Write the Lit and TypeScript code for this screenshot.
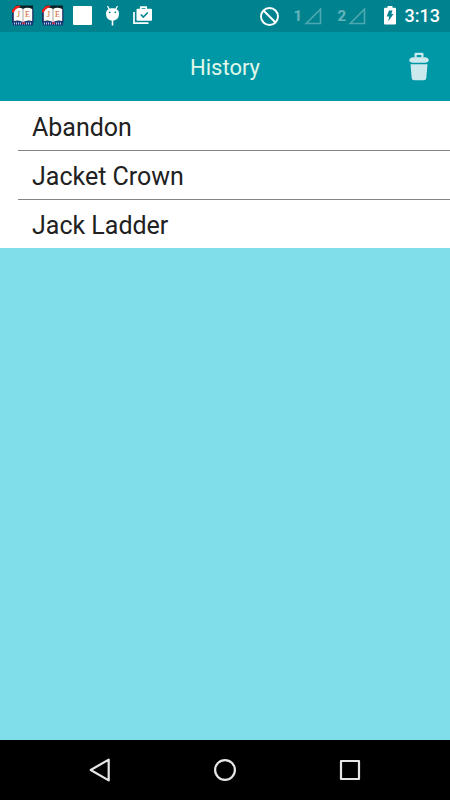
import { LitElement, html, css, svg } from "lit";
import { customElement, property, state } from "lit/decorators.js";

@customElement("status-bar")
class StatusBar extends LitElement {
  static styles = css`
    :host {
      display: flex;
      justify-content: space-between;
      align-items: center;
      height: 32px;
      padding: 0 10px 0 12px;
      background: #00838f;
      color: #fff;
    }
    svg {
      display: block;
    }
    .notices,
    .system {
      display: flex;
      align-items: center;
    }
    .notices {
      gap: 8px;
    }
    .block {
      margin-right: 14px;
    }
    .sim {
      display: flex;
      align-items: center;
      gap: 2px;
      width: 44px;
      font-size: 15px;
      line-height: 20px;
      font-weight: 700;
      color: #66b5bc;
    }
    .letter {
      font: 8px "Liberation Serif", serif;
      fill: #d0602c;
    }
    .battery {
      margin: 0 9px 0 2px;
    }
    .time {
      font-size: 18px;
      line-height: 20px;
      font-weight: 500;
    }
  `;

  private book() {
    return html`<svg width="22" height="22" viewBox="0 0 22 22" aria-hidden="true">
      <path d="M4 0.500h17V16H1V5z" fill="#0b2027" />
      <path d="M0 4h2v14H0zM20 4h1.500v14H20z" fill="#1d2f63" />
      <path d="M1 16h20v4.500H1z" fill="#173a78" />
      <path d="M1.800 4.500Q7 1.500 11 4q4-2.500 9.200 0v12Q15 14.500 11 17q-4-2.500-9.200-1z" fill="#fffdf9" />
      <path d="M11 4v12.500" stroke="#a9a4a6" />
      <path d="M0 7.500V5L4 1l4-0.500V2L4 4L1.500 7.500z" fill="#f22019" />
      <text class="letter" x="5" y="12">J</text>
      <text class="letter" x="13" y="12">E</text>
      <path d="M2 18.500h18" stroke="#b9c8e4" stroke-width="2" stroke-dasharray="1 1" />
      <path d="M10 18h3" stroke="#d8203a" stroke-width="1.500" />
    </svg>`;
  }

  private sim(n: number) {
    return html`<div class="sim">
      <span>${n}</span>
      <svg width="18" height="18" viewBox="0 0 18 18" aria-hidden="true">
        <path d="M2.200 16.500H16.500V2.200z" fill="none" stroke="#4da8b1" stroke-width="1.600" />
      </svg>
    </div>`;
  }

  render() {
    return html`
      <div class="notices">
        ${this.book()} ${this.book()}
        <svg width="22" height="22" viewBox="0 0 22 22" aria-hidden="true">
          <rect x="1" y="1" width="19" height="19" rx="1" fill="#fff" />
        </svg>
        <svg width="22" height="22" viewBox="0 0 22 22" aria-hidden="true">
          <path d="M5.500 1.200l2 3.300M15.500 1.200l-2 3.300" stroke="#fff" stroke-width="1.300" />
          <path
            d="M4 8.500C4 5 7 3.200 10.500 3.200S17 5 17 8.500c0 4.500-2.500 7-6.500 7S4 13 4 8.500z"
            fill="#fff"
          />
          <circle cx="7.700" cy="7.300" r="0.900" fill="#00838f" />
          <circle cx="13.300" cy="7.300" r="0.900" fill="#00838f" />
          <path d="M10.500 15v5.500" stroke="#fff" stroke-width="1.600" />
        </svg>
        <svg width="22" height="22" viewBox="0 0 22 22" aria-hidden="true">
          <path d="M2 7v11.100h14.500" fill="none" stroke="#fff" stroke-width="1.700" />
          <path d="M8.800 5V2.100h5.400V5" fill="none" stroke="#fff" stroke-width="1.700" />
          <rect x="4.500" y="3.800" width="15.500" height="12" rx="1" fill="#fff" />
          <path d="M8.800 9.500l2.500 2.500l4.500-4.500" fill="none" stroke="#00838f" stroke-width="1.600" />
        </svg>
      </div>
      <div class="system">
        <svg class="block" width="21" height="21" viewBox="0 0 21 21" aria-label="Do not disturb" role="img">
          <circle cx="10.500" cy="10.500" r="8.500" fill="none" stroke="#fff" stroke-width="1.900" />
          <path d="M4.500 4.500l12 12" stroke="#fff" stroke-width="1.900" />
        </svg>
        ${this.sim(1)} ${this.sim(2)}
        <svg class="battery" width="12" height="20" viewBox="0 0 12 20" aria-label="Charging" role="img">
          <path
            d="M3.500 0h5v1.800H11q1 0 1 1V17.500q0 1-1 1H1q-1 0-1-1V2.800q0-1 1-1h2.500z"
            fill="#fff"
          />
          <path d="M5 4.500H8.500L7.300 8H9.500L4.200 15.500L5.300 10.500H2.700z" fill="#00838f" />
        </svg>
        <span class="time">3:13</span>
      </div>
    `;
  }
}

@customElement("history-list")
class HistoryList extends LitElement {
  static styles = css`
    ul {
      margin: 0;
      padding: 0;
      list-style: none;
      background: #fff;
    }
    li {
      padding-left: 18px;
    }
    a {
      display: block;
      box-sizing: border-box;
      height: 49px;
      padding: 8px 14px;
      font-size: 25px;
      line-height: 38px;
      color: #212121;
      text-decoration: none;
    }
    li + li a {
      border-top: 1px solid #858585;
      padding-top: 7px;
    }
  `;

  @property({ attribute: false }) words: string[] = [];

  render() {
    return html`<ul>
      ${this.words.map((w) => html`<li><a href="#">${w}</a></li>`)}
    </ul>`;
  }
}

@customElement("nav-bar")
class NavBar extends LitElement {
  static styles = css`
    :host {
      display: flex;
      justify-content: center;
      height: 60px;
      background: #000;
    }
    button {
      display: grid;
      place-items: center;
      width: 125px;
      padding: 0;
      border: 0;
      background: none;
    }
    svg {
      fill: none;
      stroke: #e6e6e6;
      stroke-width: 2.2;
      stroke-linejoin: round;
    }
  `;

  private key(label: string, shape: unknown) {
    return html`<button aria-label=${label}>
      <svg width="26" height="26" viewBox="0 0 26 26" aria-hidden="true">${shape}</svg>
    </button>`;
  }

  render() {
    return html`
      ${this.key("Back", svg`<path d="M21.700 2.600V23.400L3.700 13z"/>`)}
      ${this.key("Home", svg`<circle cx="13" cy="13" r="9.900"/>`)}
      ${this.key("Recent apps", svg`<path d="M4 4h18v18H4z"/>`)}
    `;
  }
}

@customElement("app-root")
class AppRoot extends LitElement {
  static styles = css`
    :host {
      display: flex;
      flex-direction: column;
      min-height: 100vh;
      background: #80deea;
      font-family: Roboto, "Liberation Sans", sans-serif;
    }
    header {
      display: grid;
      grid-template-columns: 62px 1fr 62px;
      align-items: center;
      height: 69px;
      background: #0097a7;
    }
    h1 {
      grid-column: 2;
      margin: 0;
      padding-top: 2px;
      text-align: center;
      font-size: 22px;
      line-height: 28px;
      font-weight: 400;
      color: #e0f7e9;
    }
    .clear {
      display: grid;
      place-items: center;
      height: 48px;
      padding: 0;
      border: 0;
      background: none;
    }
    main {
      flex: 1;
    }
  `;

  @state() private words = ["Abandon", "Jacket Crown", "Jack Ladder"];

  render() {
    return html`
      <status-bar></status-bar>
      <header>
        <h1>History</h1>
        <button class="clear" aria-label="Clear history" @click=${() => (this.words = [])}>
          <svg width="22" height="30" viewBox="0 0 22 30" aria-hidden="true">
            <g fill="#cceaed">
              <path
                fill-rule="evenodd"
                d="M6.500 5.500V2q0-1.200 1.200-1.200h6.600q1.200 0 1.200 1.200v3.500zM8.700 5.200h4.600V3H8.700z"
              />
              <path d="M4.500 5.200h13q3 0.600 3.500 3.300q-1 2.200-4 2.200H5q-3 0-4-2.200q0.500-2.700 3.500-3.300z" />
              <path d="M2.500 12.200h17L18.300 26q-0.200 2.200-2.600 2.200H6.300Q3.900 28.200 3.700 26z" />
            </g>
          </svg>
        </button>
      </header>
      <main><history-list .words=${this.words}></history-list></main>
      <nav-bar></nav-bar>
    `;
  }
}
